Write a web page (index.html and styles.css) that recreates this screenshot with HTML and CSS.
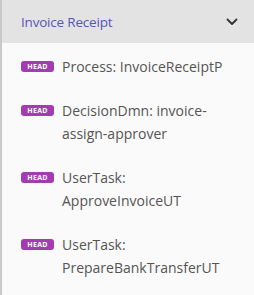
FILE: index.html
```html
<!DOCTYPE html>
<html lang="en">
<head>
    <meta charset="UTF-8">
    <title>Invoice Receipt</title>
    <link rel="stylesheet" href="styles.css">
</head>
<body>
<div class="panel">
  <!-- group header -->
  <div class="panel-header">
    <span class="panel-title">Invoice Receipt</span>
    <svg class="chevron" width="12" height="8" viewBox="0 0 12 8">
      <path d="M1.5 1.5 L6 6 L10.5 1.5" fill="none" stroke="#333" stroke-width="1.8" stroke-linecap="round" stroke-linejoin="round"/>
    </svg>
  </div>

  <!-- the entries -->
  <ul class="entry-list">
    <li class="entry"><span class="badge">HEAD</span><span class="entry-name">Process: InvoiceReceiptP</span></li>
    <li class="entry"><span class="badge">HEAD</span><span class="entry-name">DecisionDmn: invoice-assign-approver</span></li>
    <li class="entry"><span class="badge">HEAD</span><span class="entry-name">UserTask: ApproveInvoiceUT</span></li>
    <li class="entry"><span class="badge">HEAD</span><span class="entry-name">UserTask: PrepareBankTransferUT</span></li>
  </ul>
</div>
</body>
</html>
```
FILE: styles.css
```css
* {
  box-sizing: border-box;
}

body {
  margin: 0;
  font-family: "Open Sans", "DejaVu Sans", sans-serif;
  background: #fafafa;
}

.panel {
  min-height: 295px;
  border-left: 2px solid #c9c9c9;
  background: #fafafa;
}

.panel-header {
  height: 43px;
  background: #e3e3e3;
  display: flex;
  align-items: center;
  justify-content: space-between;
  padding: 0 16px 0 19px;
}

.panel-title {
  color: #5656b4;
  font-size: 13.5px;
  letter-spacing: -0.2px;
}

.chevron {
  display: block;
}

.entry-list {
  list-style: none;
  margin: 0;
  padding: 12px 26px 0 19px;
}

.entry {
  display: flex;
  align-items: flex-start;
  gap: 8px;
  margin-bottom: 21px;
}

.badge {
  flex: none;
  margin-top: 6px;
  width: 33px;
  height: 11px;
  border-radius: 3px;
  background: #a33cb2;
  color: white;
  font-size: 7px;
  font-weight: bold;
  line-height: 11px;
  text-align: center;
  letter-spacing: 0.3px;
}

.entry-name {
  color: #555;
  font-size: 14px;
  line-height: 23px;
}
```
